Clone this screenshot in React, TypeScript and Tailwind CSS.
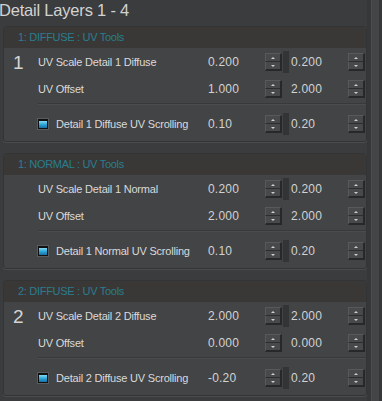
import React from "react";

type Row = { label: string; a: string; b: string };
type Panel = {
  title: string;
  num?: string;
  rows: Row[];
  scroll: { label: string; a: string; b: string };
};

const panels: Panel[] = [
  {
    title: "1: DIFFUSE : UV Tools",
    num: "1",
    rows: [
      { label: "UV Scale Detail 1 Diffuse", a: "0.200", b: "0.200" },
      { label: "UV Offset", a: "1.000", b: "2.000" },
    ],
    scroll: { label: "Detail 1 Diffuse UV Scrolling", a: "0.10", b: "0.20" },
  },
  {
    title: "1: NORMAL : UV Tools",
    rows: [
      { label: "UV Scale Detail 1 Normal", a: "0.200", b: "0.200" },
      { label: "UV Offset", a: "2.000", b: "2.000" },
    ],
    scroll: { label: "Detail 1 Normal UV Scrolling", a: "0.10", b: "0.20" },
  },
  {
    title: "2: DIFFUSE : UV Tools",
    num: "2",
    rows: [
      { label: "UV Scale Detail 2 Diffuse", a: "2.000", b: "2.000" },
      { label: "UV Offset", a: "0.000", b: "0.000" },
    ],
    scroll: { label: "Detail 2 Diffuse UV Scrolling", a: "-0.20", b: "0.20" },
  },
];

function Spinner() {
  return (
    <div className="flex flex-col w-[17px] h-[18px] mr-[1px]">
      <div className="flex-1 flex items-center justify-center bg-[#48494b] border-t border-l border-[#58595b] border-b border-b-[#2c2d2e] border-r-2 border-r-[#27282a]">
        <div className="w-0 h-0 border-l-[2px] border-r-[2px] border-b-[2px] border-l-transparent border-r-transparent border-b-[#cfcfcf]" />
      </div>
      <div className="flex-1 flex items-center justify-center bg-[#48494b] border-l border-[#58595b] border-b-2 border-b-[#27282a] border-r-2 border-r-[#27282a]">
        <div className="w-0 h-0 border-l-[2px] border-r-[2px] border-t-[2px] border-l-transparent border-r-transparent border-t-[#cfcfcf]" />
      </div>
    </div>
  );
}

function Field({ value }: { value: string }) {
  return (
    <div className="w-[77px] h-[22px] flex items-center justify-between">
      <span className="pl-[2px] text-[12px] text-[#d2d2d2] tracking-[0.2px]">{value}</span>
      <Spinner />
    </div>
  );
}

function Values({ a, b, split }: { a: string; b: string; split: boolean }) {
  return (
    <div className="flex items-center">
      <Field value={a} />
      <div className={`w-[6px] h-[22px] ${split ? "bg-[#333436]" : ""}`} />
      <Field value={b} />
    </div>
  );
}

function PanelBox({ p }: { p: Panel }) {
  return (
    <div className="rounded-[3px] border border-[#333436] bg-[#434446] shadow-[0_1px_0_#4a4b4d]">
      <div className="h-[21px] bg-[#393837] flex items-center pl-[14px] text-[11px] tracking-[-0.3px] text-[#2b7d8e] rounded-t-[3px]">
        {p.title}
      </div>
      <div className="pt-[3px] pb-[6px]">
        {p.rows.map((r, i) => (
          <div key={i} className={`flex items-center h-[22px] ${i > 0 ? "mt-[5px]" : ""}`}>
            <div className="w-[34px] pl-[9px] text-[19px] leading-none text-[#d4d4d4]">
              {i === 0 ? p.num : ""}
            </div>
            <div className="flex-1 text-[11px] tracking-[-0.2px] text-[#dadada]">{r.label}</div>
            <Values a={r.a} b={r.b} split={i === 0} />
          </div>
        ))}
        <div className="ml-[34px] mt-[3px] h-[1px] bg-[#38393b] shadow-[0_1px_0_#4b4c4e]" />
        <div className="flex items-center h-[22px] mt-[9px]">
          <div className="w-[33px]" />
          <div className="w-[12px] h-[12px] border border-[#5a5b5d] bg-[#111] flex items-center justify-center mr-[7px]">
            <div className="w-[8px] h-[7px] bg-gradient-to-b from-[#7fd8f4] via-[#2aa7d8] to-[#1a6fa0]" />
          </div>
          <div className="flex-1 text-[11px] tracking-[-0.2px] text-[#dadada]">{p.scroll.label}</div>
          <Values a={p.scroll.a} b={p.scroll.b} split={true} />
        </div>
      </div>
    </div>
  );
}

export default function App() {
  return (
    <div
      className="w-[382px] h-[401px] bg-[#3b3c3e] overflow-hidden flex"
      style={{ fontFamily: '"Liberation Sans", Arial, sans-serif' }}
    >
      <div className="flex-1 flex flex-col">
        <div className="h-[27px] text-[16.5px] leading-[20px] text-[#d2d2d2] -ml-[1px] tracking-[-0.2px]">
          Detail Layers 1 - 4
        </div>
        <div className="flex flex-col gap-[11px] pl-[3px] pr-[0px] -mt-[1px]">
          {panels.map((p, i) => (
            <PanelBox key={i} p={p} />
          ))}
        </div>
      </div>
      <div className="w-[15px] h-full bg-[#363739] flex justify-center">
        <div className="w-[8px] h-full bg-[#444547] border-l border-[#4c4d4f]" />
      </div>
    </div>
  );
}
